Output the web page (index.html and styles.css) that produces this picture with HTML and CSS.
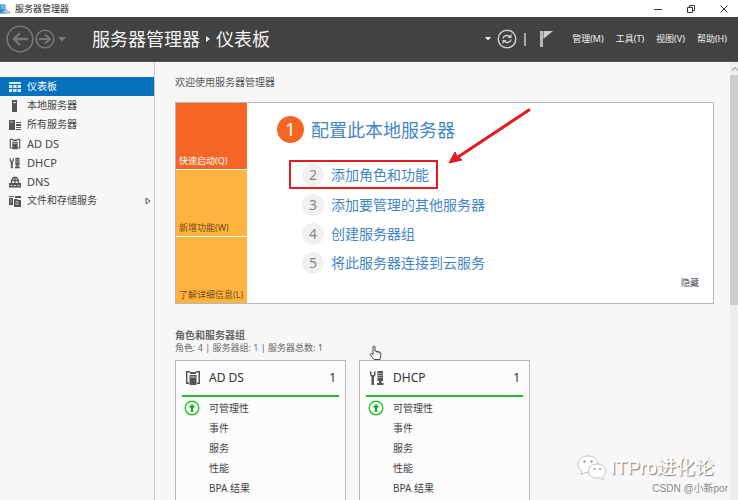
FILE: index.html
```html
<!DOCTYPE html>
<html lang="zh-CN">
<head>
<meta charset="utf-8">
<title>服务器管理器</title>
<link rel="stylesheet" href="styles.css">
</head>
<body>
<svg class="defs" aria-hidden="true">
  <symbol id="i-adds" viewBox="0 0 16 16"><path d="M1 1h4v1.500H2.500v10H4V14H1zM15 1h-4v1.500h2.500v10H12V14h3z"/><path d="M5 2h6v2H5zM4.500 5h7v10h-7z"/><path d="M5.500 7h5" stroke="#ddd" fill="none"/></symbol>
  <symbol id="i-dhcp" viewBox="0 0 16 16"><path d="M1 1v4l1.500 2v8H5V7l1.500-2V1L5 2v3H2.500V2z"/><path d="M8.500 1H14v10H8.500zM10 11h2.500v2h2v2H8v-2h2z"/><path d="M9 3.500h4.500M9 5.500h4.500M9 7.500h4.500" stroke="#bbb" stroke-width=".8" fill="none"/></symbol>
  <symbol id="i-up" viewBox="0 0 16 16"><circle cx="8" cy="8" r="6.8" fill="#fff" stroke="#22c532" stroke-width="1.4"/><path d="M8 4 11.500 7.500H9.100V12H6.900V7.500H4.500z" fill="#16a526"/></symbol>
</svg>
<header class="titlebar">
  <svg class="app-icon" viewBox="0 0 12 12"><path d="M0 1h6v10H0z" fill="#2b8fd0"/><path d="M1 3h4M1 5h4" stroke="#d8efff"/><path d="M3 11V8l3-2 5 3v2z" fill="#8ea7b8"/><path d="M5 9h5" stroke="#e9f1f6"/></svg>
  <span class="app-name">服务器管理器</span>
  <div class="window-buttons">
    <button aria-label="最小化"><svg viewBox="0 0 10 10"><path d="M1 5.500h8"/></svg></button>
    <button aria-label="还原"><svg viewBox="0 0 10 10"><path d="M1.500 3.500h5v5h-5zM3.500 3.500v-2h5v5h-2"/></svg></button>
    <button aria-label="关闭"><svg viewBox="0 0 10 10"><path d="m1.500 1.500 7 7m0-7-7 7"/></svg></button>
  </div>
</header>
<div class="toolbar">
  <div class="history">
    <button aria-label="后退"><svg width="28" height="28" viewBox="0 0 28 28"><circle cx="14" cy="14" r="12.8"/><path d="M22 14H8m6-6-6 6 6 6" stroke-width="2.4"/></svg></button>
    <button aria-label="前进"><svg width="20" height="20" viewBox="0 0 20 20"><circle cx="10" cy="10" r="8.8"/><path d="M4 10h11m-5-4.500 5 4.500-5 4.500" stroke-width="2"/></svg></button>
    <button aria-label="历史记录"><svg class="caret" width="8" height="5" viewBox="0 0 8 5"><path d="M0 0h8L4 4.500z"/></svg></button>
  </div>
  <h1 class="crumbs"><span>服务器管理器</span><svg width="4" height="8" viewBox="0 0 4 8"><path d="M0 1v6l4-3z" fill="#eee"/></svg><span>仪表板</span></h1>
  <div class="tools">
    <button aria-label="更多"><svg width="6" height="4" viewBox="0 0 6 4"><path d="M0 0h6L3 3.500z" fill="#eee"/></svg></button>
    <button aria-label="刷新"><svg width="20" height="20" viewBox="0 0 20 20" fill="none" stroke="#ccc" stroke-width="1.500"><circle cx="10" cy="10" r="8.800"/><path d="M6 9.500c.4-3 4.500-4 6.800-1.800M14 10.500c-.4 3-4.500 4-6.800 1.800"/><path d="M14.500 5v4h-4zM5.500 15v-4h4z" fill="#ccc" stroke="none"/></svg></button>
    <span class="divider"></span>
    <button class="flag" aria-label="通知"><svg width="13" height="18" viewBox="0 0 13 18"><path d="M0 1h3v16H0z" fill="#b9b9b9"/><path d="M3.500 1H13L3.500 9z" fill="#ccc"/></svg></button>
    <nav class="menu"><button>管理(M)</button><button>工具(T)</button><button>视图(V)</button><button>帮助(H)</button></nav>
  </div>
</div>
<div class="workspace">
  <nav class="sidebar">
    <a href="#" class="active"><svg viewBox="0 0 12 12"><path d="M0 1h12v2H0zM0 4h3.300v3H0zM4.300 4h3.300v3H4.300zM8.600 4H12v3H8.600zM0 8h3.300v3H0zM4.300 8h3.300v3H4.300zM8.600 8H12v3H8.600z"/></svg><span>仪表板</span></a>
    <a href="#"><svg viewBox="0 0 12 12"><path d="M3 0h5v12H3z"/><path d="M4 2.500h3" stroke="#ddd"/></svg><span>本地服务器</span></a>
    <a href="#"><svg viewBox="0 0 12 12"><path d="M0 1h6v10H0zM7 3h5v1H7zM7 5h5v2H7zM7 8h5v1H7zM7 10h5v1H7z"/><path d="M1 3h3" stroke="#ccc"/></svg><span>所有服务器</span></a>
    <a href="#"><svg><use href="#i-adds"/></svg><span class="latin">AD DS</span></a>
    <a href="#"><svg><use href="#i-dhcp"/></svg><span class="latin">DHCP</span></a>
    <a href="#"><svg viewBox="0 0 12 12"><path d="M0 7h12v4.500H0z"/><path d="M2.500 7V4.500L4.500 1.500h3l2 3V7M3 4.500h6M6 2v5" fill="none" stroke="#555" stroke-width="1.300"/><path d="M1.500 9.500h2M5 9.500h2M8.500 9.500h2" stroke="#ddd"/></svg><span class="latin">DNS</span></a>
    <a href="#"><svg viewBox="0 0 12 12"><path d="M0 1h5v1H0zM0 3h4v7H0zM6 1h6v2H6z"/><path d="M5 4h3l1 1h3v7H5z"/><path d="M7 6.500h2v3H7zM1 5h2M1 7h2" fill="none" stroke="#ccc" stroke-width=".7"/></svg><span>文件和存储服务</span><svg class="expand" viewBox="0 0 6 8"><path d="M1 1v6l4-3z" fill="none" stroke="#555"/></svg></a>
  </nav>
  <main class="content">
    <h2 class="welcome">欢迎使用服务器管理器</h2>
    <section class="hero">
      <div class="tiles"><button class="hot">快速启动(Q)</button><button>新增功能(W)</button><button>了解详细信息(L)</button></div>
      <div class="steps">
        <a href="#" class="primary"><b>1</b><span>配置此本地服务器</span></a>
        <a href="#" class="marked"><b>2</b><span>添加角色和功能</span></a>
        <a href="#"><b>3</b><span>添加要管理的其他服务器</span></a>
        <a href="#"><b>4</b><span>创建服务器组</span></a>
        <a href="#"><b>5</b><span>将此服务器连接到云服务</span></a>
      </div>
      <button class="hide">隐藏</button>
      <svg class="arrow" viewBox="0 0 84 56"><path d="M81 2 10 49" stroke="#e41b23" stroke-width="3" stroke-linecap="round"/><path d="m1 55 6-11 2 4 5 4z" fill="#e41b23" stroke="#e41b23"/></svg>
    </section>
    <h2 class="group-title">角色和服务器组</h2>
    <p class="summary">角色: 4 | 服务器组: 1 | 服务器总数: 1</p>
    <div class="cards">
      <article class="card">
        <header><svg><use href="#i-adds"/></svg><h3>AD DS</h3><span>1</span></header>
        <ul><li><svg><use href="#i-up"/></svg>可管理性</li><li>事件</li><li>服务</li><li>性能</li><li>BPA 结果</li></ul>
      </article>
      <article class="card">
        <header><svg><use href="#i-dhcp"/></svg><h3>DHCP</h3><span>1</span></header>
        <ul><li><svg><use href="#i-up"/></svg>可管理性</li><li>事件</li><li>服务</li><li>性能</li><li>BPA 结果</li></ul>
      </article>
    </div>
  </main>
  <div class="scrollbar"><svg viewBox="0 0 8 12"><path d="m2 8 3-3 3 3" fill="none" stroke="#777"/></svg><div class="thumb"></div></div>
</div>
<svg class="cursor" viewBox="0 0 12 16"><path d="M3.500 9V2c0-1.500 2-1.500 2 0v4l4.500 1c1.500.4 1.500 1.500 1.300 3L10.500 14.500h-6L1 10c-.8-1.500.8-2 2.500-.5z" fill="#fff" stroke="#444"/><path d="M7.500 6.500v2M9.500 7v2" stroke="#444" stroke-width=".7"/></svg>
<div class="watermark">
  <div class="brand"><svg viewBox="0 0 30 26"><g fill="#fff" stroke="#aaa" stroke-width=".7"><path d="M11 1C5 1 1 5 1 9.500c0 3 1.500 5 4 6.500l-1 3.500 4-2c8 1.500 13-2 13-8S16 1 11 1z"/><path d="M20 9c-5 0-8.500 3-8.500 7s4 7.500 9 7.200l2.500-.4 3.500 2-1-3c2-1.500 3.300-3.300 3.300-5.800C28.800 12 25 9 20 9z"/></g><g fill="#999"><circle cx="7.500" cy="6.500" r="1.200"/><circle cx="14.500" cy="6.500" r="1.200"/><circle cx="17.500" cy="14" r="1"/><circle cx="23" cy="14" r="1"/></g></svg><span>ITPro进化论</span></div>
  <span class="credit">CSDN @小新por</span>
</div>
</body>
</html>
```
FILE: styles.css
```css
* { box-sizing: border-box; }
body {
  margin: 0;
  height: 100vh;
  overflow: hidden;
  display: flex;
  flex-direction: column;
  background: #f7f7f7;
  color: #444;
  font: 10px/20px "Noto Sans", "Noto Sans CJK SC", sans-serif;
}
button { border: 0; padding: 0; background: none; color: inherit; font: inherit; }
button svg { display: block; }
a { color: inherit; text-decoration: none; }
h1, h2, h3, p, ul { margin: 0; padding: 0; font-size: 10px; font-weight: 400; }
.defs { position: absolute; width: 0; height: 0; }

.titlebar { flex: none; height: 17px; display: flex; align-items: center; background: #fff; color: #222; font-size: 9px; line-height: 16px; }
.app-icon { width: 11px; height: 12px; margin-right: 4px; }
.window-buttons { margin-left: auto; display: flex; gap: 23px; padding-right: 9px; }
.window-buttons svg { width: 10px; height: 10px; fill: none; stroke: #333; }

.toolbar { flex: none; height: 45px; display: flex; align-items: center; background: #424242; color: #f2f2f2; border-bottom: 1px solid #555; }
.history { display: flex; align-items: center; width: 92px; padding-left: 6px; }
.history svg { fill: none; stroke: #777; stroke-width: 1.6; }
.history button + button { margin-left: 1px; }
.history button:last-child { margin-left: 3px; }
.history .caret { fill: #777; stroke: none; }
.crumbs { display: flex; align-items: center; gap: 6px; font-size: 18px; line-height: 28px; }
.tools { margin-left: auto; display: flex; align-items: center; padding-right: 11px; }
.tools > button + button { margin-left: 6px; }
.divider { width: 2px; height: 13px; margin: 0 14px 0 7px; background: #aaa; }
.menu { display: flex; gap: 12px; margin-left: 19px; font-size: 9px; }

.workspace { flex: 1; min-height: 0; display: flex; }
.sidebar { flex: none; width: 155px; padding-top: 15px; border-right: 1px solid #ccc; }
.sidebar a { display: flex; align-items: center; height: 19px; padding: 0 3px 0 9px; gap: 6px; line-height: 19px; }
.sidebar svg { width: 12px; height: 12px; fill: #555; }
.sidebar .active { background: #0871bd; color: #fff; }
.sidebar .active svg { fill: #d5ecff; }
.sidebar .latin { font-size: 11px; }
.sidebar .expand { width: 6px; height: 8px; margin-left: auto; }

.content { flex: 1; min-width: 0; padding: 10px 16px 0 20px; overflow: hidden; }
.welcome { color: #555; margin-bottom: 10px; }
.hero { position: relative; display: flex; height: 202px; background: #fff; border: 1px solid #b8b8b8; }
.tiles { width: 71px; display: grid; grid-template-rows: repeat(3, 1fr); gap: 1px; }
.tiles button { display: flex; align-items: flex-end; padding-left: 3px; background: #ffb441; color: #764c12; font-size: 9px; line-height: 16px; white-space: nowrap; }
.tiles .hot { background: #f56523; color: #fff; }
.steps { padding: 12px 0 0 30px; display: flex; flex-direction: column; align-items: flex-start; color: #4486c4; font-size: 14px; }
.steps a { display: flex; align-items: center; height: 29px; padding-left: 25px; gap: 7px; }
.steps b { width: 22px; height: 22px; border-radius: 50%; background: #f0f0f0; color: #888; font-weight: 400; line-height: 22px; text-align: center; }
.steps .primary { padding-left: 0; margin-bottom: 16px; font-size: 18px; }
.steps .primary b { width: 27px; height: 27px; line-height: 27px; background: #f56523; color: #fff; }
.steps .marked { height: 29px; margin-left: 12px; padding: 0 7px 0 11px; border: 2px solid #e41b23; margin-bottom: 1px; }
.hide { position: absolute; right: 14px; bottom: 10px; font-size: 9px; }
.arrow { position: absolute; left: 272px; top: 5px; width: 84px; height: 56px; }
.group-title { margin-top: 24px; line-height: 14px; font-weight: 700; color: #666; }
.summary { font-size: 9px; line-height: 11px; color: #666; }
.cards { display: flex; gap: 13px; margin-top: 7px; }
.card { width: 171px; height: 170px; padding: 0 6px; background: #fcfcfc; border: 1px solid #b8b8b8; }
.card header { display: flex; align-items: center; height: 36px; padding: 0 3px; border-bottom: 2px solid #22b832; color: #333; font-size: 12px; }
.card svg { width: 16px; height: 16px; margin-right: 8px; fill: #555; }
.card h3 { flex: 1; font-size: 12px; }
.card ul { list-style: none; padding-top: 1px; }
.card li { position: relative; padding-left: 27px; }
.card li svg { position: absolute; left: 2px; top: 2px; }

.scrollbar { flex: none; width: 8px; background: #eee; }
.scrollbar svg { display: block; width: 8px; height: 13px; }
.thumb { height: 230px; background: #cdcdcd; }

.cursor { position: absolute; left: 369px; top: 345px; width: 13px; height: 16px; }
.watermark { position: absolute; right: 10px; bottom: 3px; display: flex; flex-direction: column; align-items: flex-end; color: #888; }
.brand { display: flex; align-items: center; gap: 4px; margin-right: 14px; color: #fff; font: 19px/26px "Liberation Sans", "Noto Sans CJK SC", sans-serif; text-shadow: 1px 1px 1px #777; }
.brand svg { width: 30px; height: 26px; }
.credit { font: 10px/16px "Liberation Sans", "Noto Sans CJK SC", sans-serif; }
```
